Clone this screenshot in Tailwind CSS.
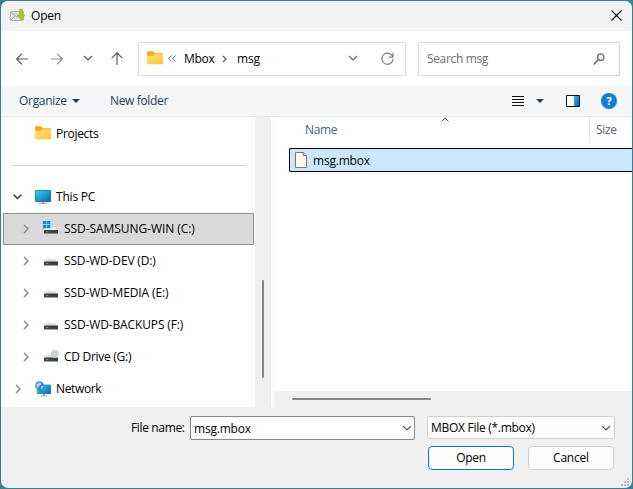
<!DOCTYPE html>
<html lang="en">
<head>
  <meta charset="UTF-8">
  <meta name="viewport" content="width=device-width, initial-scale=1.0">
  <title>Open</title>
  <script src="https://cdn.jsdelivr.net/npm/@tailwindcss/browser@4"></script>
</head>
<body class="h-screen overflow-hidden bg-[#3a7d95] p-px font-['Open_Sans','Noto_Sans',sans-serif] text-[12px] leading-4 tracking-[-0.2px] text-black">
  <!-- Shared icons -->
  <svg class="absolute h-0 w-0">
    <defs>
      <linearGradient id="folderFill" x1="0" y1="0" x2="1" y2="1"><stop offset="0" stop-color="#ffe08a"/><stop offset="1" stop-color="#ffc52f"/></linearGradient>
      <linearGradient id="screenFill" x1="0" y1="0" x2="1" y2="1"><stop offset="0" stop-color="#36d5e6"/><stop offset="1" stop-color="#0f62b4"/></linearGradient>
      <linearGradient id="paneFill" x1="0" y1="0" x2="1" y2="1"><stop offset="0" stop-color="#35b5f5"/><stop offset="1" stop-color="#0067c8"/></linearGradient>
      <symbol id="folder" viewBox="0 0 16 14">
        <path d="M0 1.2Q0 .3 1 .3h4.6q.7 0 1.100.5L8 2.200h7q1 0 1 1V7H0z" fill="#f5ac08"/>
        <path d="M0 4.800h5.800L8 3h7q1 0 1 1v8.300q0 1-1 1H1q-1 0-1-1z" fill="url(#folderFill)"/>
      </symbol>
      <symbol id="chevron" viewBox="0 0 6 10"><path d="M1 1l4 4-4 4" fill="none" stroke="currentColor" stroke-width="1.5"/></symbol>
      <symbol id="down" viewBox="0 0 10 6"><path d="M1 1l4 4 4-4" fill="none" stroke="currentColor" stroke-width="1.1"/></symbol>
      <symbol id="drive" viewBox="0 0 16 16">
        <path d="M3 5.500h10L15 9H1z" fill="#e1e3e5"/>
        <rect x="1" y="8.500" width="14" height="4" rx=".6" fill="#3d4144"/>
        <path d="M3.300 10.600h2" stroke="#35c94a" stroke-width="1.200"/>
      </symbol>
    </defs>
  </svg>

  <div class="flex h-full flex-col overflow-hidden rounded-[7px] bg-[#f0f0f0]">
    <!-- Title bar -->
    <div class="flex h-[30px] shrink-0 items-center bg-[#f3f3f3] pl-[9px] pr-[10px]">
      <svg class="size-4" viewBox="0 0 16 16">
        <rect x=".5" y="3.500" width="13" height="9" rx=".5" fill="#dedede" stroke="#b5b5b5"/>
        <path d="M1 4l6 5 6-5M1 12l4.500-4.500M13 12L8.500 7.500" fill="none" stroke="#a9a9a9"/>
        <path d="M9.600 1h3v6h2.200l-3.700 5.500L7.400 7h2.200z" fill="#a5cf1c" stroke="#86b50c" stroke-width=".5"/>
      </svg>
      <span class="ml-[5px] tracking-[-0.2px]">Open</span>
      <svg class="-mt-px ml-auto size-[11px]" viewBox="0 0 11 11"><path d="M.5.5l10 10M10.500.5l-10 10" stroke="#111" stroke-width="1.1"/></svg>
    </div>

    <!-- Navigation and address bar -->
    <div class="flex h-[55px] shrink-0 items-center bg-white pl-[15px] pr-[12px]">
      <svg class="h-3 w-3" viewBox="0 0 12 12"><path d="M.7 6H12M6 .7L.7 6 6 11.300" fill="none" stroke="#5c5c5c" stroke-width="1.200"/></svg>
      <svg class="ml-[23px] h-3 w-3" viewBox="0 0 12 12"><path d="M0 6h11.300M6 .7L11.300 6 6 11.300" fill="none" stroke="#8e8e8e" stroke-width="1.200"/></svg>
      <svg class="-mt-px ml-[20px] h-[6px] w-[10px] text-[#555]"><use href="#down"/></svg>
      <svg class="ml-[18px] h-[13px] w-3" viewBox="0 0 12 13"><path d="M6 .8V13M.7 6.100L6 .8l5.300 5.300" fill="none" stroke="#5c5c5c" stroke-width="1.200"/></svg>
      <div class="ml-[15px] flex h-[34px] w-[268px] items-center border border-[#d9d9d9] pl-[8px] pr-[11px]">
        <svg class="-mt-[2px] h-[14px] w-4"><use href="#folder"/></svg>
        <svg class="-mt-px ml-[5px] h-[7px] w-2" viewBox="0 0 8 7"><path d="M3.700.5l-3 3 3 3M7.500.5l-3 3 3 3" fill="none" stroke="#666"/></svg>
        <span class="ml-[8px] w-[31px] whitespace-nowrap tracking-[-0.3px]">Mbox</span>
        <svg class="ml-[7px] h-[8px] w-[5px] text-[#555]"><use href="#chevron"/></svg>
        <span class="ml-[10px] tracking-[-0.2px]">msg</span>
        <svg class="-mt-px ml-auto h-[6px] w-[10px] text-[#666]"><use href="#down"/></svg>
        <svg class="ml-[23px] size-[13px]" viewBox="0 0 13 13"><path d="M11.900 5.200A5.600 5.600 0 1 0 12.100 7M12 .8v4.400H7.800" fill="none" stroke="#808080" stroke-width="1.200"/></svg>
      </div>
      <div class="ml-[12px] flex h-[34px] w-[202px] items-center border border-[#d9d9d9] pl-[8px] pr-[14px] text-[#6d6d6d]">
        <span class="tracking-[-0.35px]">Search msg</span>
        <svg class="ml-auto size-3" viewBox="0 0 12 12"><circle cx="7.700" cy="4.300" r="3.200" fill="none" stroke="#777" stroke-width="1.500"/><path d="M5.300 6.700L.7 11.300" stroke="#777" stroke-width="1.700"/></svg>
      </div>
    </div>

    <!-- Toolbar -->
    <div class="flex h-[31px] shrink-0 items-center border-b border-[#e6e7e9] bg-[#f5f6f8] pl-[18px] pr-[15px] text-[#1e3a5f]">
      <span class="w-[47px] whitespace-nowrap tracking-[-0.3px]">Organize</span>
      <svg class="ml-[6px] h-1 w-2" viewBox="0 0 8 4"><path d="M0 0h8L4 4z" fill="currentColor"/></svg>
      <span class="ml-[30px] tracking-[-0.35px]">New folder</span>
      <svg class="ml-auto h-[11px] w-3" viewBox="0 0 12 11"><path d="M0 .5h12M0 3.500h12M0 6.500h12M0 9.500h12" stroke="#111"/></svg>
      <svg class="ml-[12px] h-1 w-2" viewBox="0 0 8 4"><path d="M0 0h8L4 4z" fill="currentColor"/></svg>
      <svg class="ml-[22px] h-3 w-[14px]" viewBox="0 0 14 12"><path d="M.5.5h13v11H.5z" fill="#fff" stroke="#111"/><path d="M8 1h5v10H8z" fill="url(#paneFill)"/></svg>
      <div class="ml-[21px] flex size-4 items-center justify-center rounded-full bg-[#0f7ed8] text-[11px] font-bold text-white">?</div>
    </div>

    <div class="flex h-[290px] shrink-0 bg-white">
      <!-- Folder tree -->
      <div class="flex w-[254px] shrink-0 flex-col">
        <div class="flex h-8 items-center pl-[34px] pt-px">
          <svg class="-mt-px h-[14px] w-4"><use href="#folder"/></svg>
          <span class="ml-[5px] tracking-[-0.3px]">Projects</span>
        </div>
        <div class="flex h-8 items-center pl-[10px] pr-[9px]"><div class="h-px w-full bg-[#d4d4d4]"></div></div>
        <div class="flex h-8 items-center pl-[12px]">
          <svg class="h-[6px] w-[9px]" viewBox="0 0 9 6"><path d="M.7.7l3.800 3.800L8.300.7" fill="none" stroke="#333" stroke-width="1.500"/></svg>
          <svg class="ml-[13px] size-4" viewBox="0 0 16 16"><path d="M7 12h2v2.300H7zM4 14h8v1H4z" fill="#9aa5ad"/><rect y="1" width="16" height="12" rx="1" fill="#1477ae"/><rect x=".7" y="1.700" width="14.600" height="10.600" fill="url(#screenFill)"/></svg>
          <span class="ml-[5px] tracking-[-0.2px]">This PC</span>
        </div>
        <div class="ml-[2px] flex h-8 w-[251px] items-center border border-[#919191] bg-[#d9d9d9] pl-[19px]">
          <svg class="h-[10px] w-[6px] text-[#8a8a8a]"><use href="#chevron"/></svg>
          <svg class="ml-[14px] size-4" viewBox="0 0 16 16"><path d="M4 6.500h9L15 9.500H1z" fill="#eceeef"/><rect x="1" y="9" width="14" height="3.500" rx=".6" fill="#3d4144"/><path d="M3.300 10.800h2" stroke="#35c94a"/><path d="M0 0h3.300v3.300H0zM4 0h3.300v3.300H4zM0 4h3.300v3.300H0zM4 4h3.300v3.300H4z" fill="#0f86df"/></svg>
          <span class="ml-[5px] whitespace-nowrap tracking-[-0.06px]">SSD-SAMSUNG-WIN (C:)</span>
        </div>
        <div class="flex h-8 items-center pl-[22px]">
          <svg class="h-[10px] w-[6px] text-[#8a8a8a]"><use href="#chevron"/></svg>
          <svg class="ml-[14px] size-4"><use href="#drive"/></svg>
          <span class="ml-[5px] whitespace-nowrap tracking-[-0.15px]">SSD-WD-DEV (D:)</span>
        </div>
        <div class="flex h-8 items-center pl-[22px]">
          <svg class="h-[10px] w-[6px] text-[#8a8a8a]"><use href="#chevron"/></svg>
          <svg class="ml-[14px] size-4"><use href="#drive"/></svg>
          <span class="ml-[5px] whitespace-nowrap tracking-[-0.12px]">SSD-WD-MEDIA (E:)</span>
        </div>
        <div class="flex h-8 items-center pl-[22px]">
          <svg class="h-[10px] w-[6px] text-[#8a8a8a]"><use href="#chevron"/></svg>
          <svg class="ml-[14px] size-4"><use href="#drive"/></svg>
          <span class="ml-[5px] whitespace-nowrap tracking-[-0.13px]">SSD-WD-BACKUPS (F:)</span>
        </div>
        <div class="flex h-8 items-center pl-[22px]">
          <svg class="h-[10px] w-[6px] text-[#8a8a8a]"><use href="#chevron"/></svg>
          <svg class="ml-[14px] size-4" viewBox="0 0 16 16"><use href="#drive"/><circle cx="11.800" cy="4.800" r="4" fill="#ccd4da"/><circle cx="11.800" cy="4.800" r="1.200" fill="#fff" stroke="#9da8b0" stroke-width=".5"/></svg>
          <span class="ml-[5px] whitespace-nowrap tracking-[-0.28px]">CD Drive (G:)</span>
        </div>
        <div class="flex h-8 items-center pl-[14px]">
          <svg class="h-[10px] w-[6px] text-[#8a8a8a]"><use href="#chevron"/></svg>
          <svg class="ml-[14px] size-4" viewBox="0 0 16 16"><path d="M8 12h2v2.500H8zM5.500 14.500h7v1h-7z" fill="#9aa5ad"/><rect x="2" y="3.500" width="14" height="9.500" rx=".8" fill="url(#screenFill)"/><circle cx="4.500" cy="4.500" r="4.300" fill="#3b84b5"/><path d="M1 4q2-3 4-2.500l1.500 1.800L4 5l-1 2.500zM6 5.500l2.300-1-1 3-1.500.5z" fill="#a8d8ee"/></svg>
          <span class="ml-[5px] tracking-[-0.35px]">Network</span>
        </div>
      </div>

      <!-- Tree scrollbar -->
      <div class="flex w-4 shrink-0 justify-center bg-[#f0f0f0] pt-[163px]">
        <div class="h-[98px] w-[2px] rounded-full bg-[#868686]"></div>
      </div>
      <div class="ml-[2px] w-px shrink-0 bg-[#f3f3f3]"></div>

      <!-- File list -->
      <div class="flex min-w-0 flex-1 flex-col">
        <div class="flex h-[25px] text-[#4c607a]">
          <span class="mt-[5px] pl-[31px] tracking-[-0.35px]">Name</span>
          <svg class="ml-auto mt-0 h-[5px] w-2" viewBox="0 0 8 5"><path d="M.5 4.500L4 1l3.500 3.500" fill="none" stroke="#555"/></svg>
          <div class="ml-[140px] w-px bg-[#e5e5e5]"></div>
          <span class="mt-[5px] w-[42px] pl-[6px] tracking-[-0.3px]">Size</span>
        </div>
        <div class="ml-[15px] mt-[6px] flex h-6 items-center rounded-l-[2px] border border-r-0 border-black bg-[#cce8ff] pl-[5px]">
          <svg class="h-4 w-3" viewBox="0 0 12 16"><path d="M.5.5h7.800l3.200 3.200v11.800H.5z" fill="#fafafa" stroke="#7a7672"/><path d="M8.300.5v3.200h3.200" fill="#fff" stroke="#7a7672"/></svg>
          <span class="ml-[6px] mt-[2px]">msg.mbox</span>
        </div>
        <div class="ml-px mt-auto flex h-4 items-center bg-[#f0f0f0] pl-[17px]"><div class="h-[2px] w-[139px] rounded-full bg-[#868686]"></div></div>
      </div>
    </div>

    <!-- File name, type and actions -->
    <div class="relative flex flex-1 flex-col pr-[17px] pt-[9px]">
      <div class="flex items-start justify-end">
        <span class="mr-[5px] mt-[4px] w-[54px] whitespace-nowrap tracking-[-0.35px]">File name:</span>
        <div class="flex h-6 w-[225px] items-center rounded-[2px] border border-[#868686] bg-white pl-[3px] pr-[2px] pt-px">
          <span>msg.mbox</span>
          <svg class="-mt-px ml-auto h-[6px] w-[10px] text-[#555]"><use href="#down"/></svg>
        </div>
        <div class="ml-[12px] flex h-[23px] w-[188px] items-center rounded-[2px] border border-[#cfcfcf] bg-[#fdfdfd] pl-[3px] pr-[3px]">
          <span class="whitespace-nowrap tracking-[-0.28px]">MBOX File (*.mbox)</span>
          <svg class="ml-auto h-[6px] w-[10px] text-[#555]"><use href="#down"/></svg>
        </div>
      </div>
      <div class="mr-px mt-[6px] flex justify-end gap-[14px]">
        <button class="h-6 w-[86px] rounded-[4px] border border-[#0078d4] bg-[#fdfdfd] tracking-[-0.3px]">Open</button>
        <button class="h-6 w-[86px] rounded-[4px] border border-[#d0d0d0] bg-[#fdfdfd]">Cancel</button>
      </div>
      <svg class="absolute bottom-[2px] right-[3px] size-2" viewBox="0 0 8 8"><path d="M6 0h2v2H6zM3 3h2v2H3zM6 3h2v2H6zM0 6h2v2H0zM3 6h2v2H3zM6 6h2v2H6z" fill="#bdbdbd"/></svg>
    </div>
  </div>
</body>
</html>
